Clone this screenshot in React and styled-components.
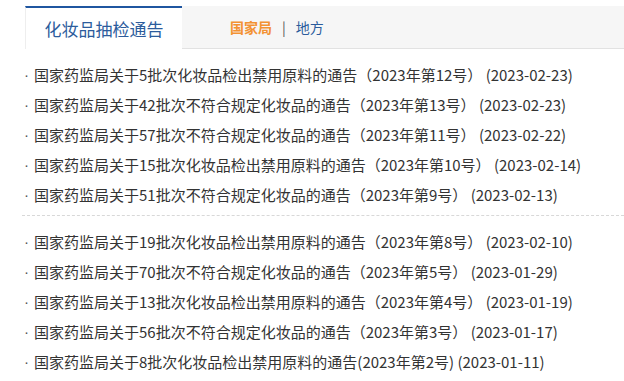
import styled, { createGlobalStyle } from 'styled-components';

const GlobalStyle = createGlobalStyle`
  body {
    margin: 0;
    background: #fff;
    font-family: "Noto Sans CJK SC", "Microsoft YaHei", sans-serif;
  }
`;

const Wrapper = styled.div`
  padding: 6px 0 0 22px;
`;

const TabBar = styled.div`
  display: flex;
  align-items: stretch;
  height: 42px;
  margin-left: 3px;
  background: #f6f6f6;
  border-bottom: 1px solid #e2e2e2;
`;

const ActiveTab = styled.div`
  width: 156px;
  display: flex;
  align-items: center;
  justify-content: center;
  background: #fff;
  border-top: 2px solid #1f56a0;
  border-left: 1px solid #eee;
  margin-bottom: -1px;
  font-size: 17px;
  color: #2c5c9c;
`;

const SubTabs = styled.div`
  display: flex;
  align-items: center;
  padding-left: 48px;
  font-size: 14px;
  color: #2c5c9c;
`;

const SubTab = styled.span`
  color: ${(p) => (p.$active ? '#f39233' : '#2c5c9c')};
  font-weight: ${(p) => (p.$active ? 600 : 400)};
`;

const Sep = styled.span`
  margin: 0 10px;
  color: #555;
`;

const List = styled.ul`
  list-style: none;
  margin: 0;
  padding: ${(p) => (p.$first ? '10px 0 6px' : '10px 0 0')};
  border-bottom: ${(p) => (p.$first ? '1px dashed #d8d8d8' : 'none')};
`;

const Item = styled.li`
  display: flex;
  align-items: center;
  height: 30px;
  font-size: 15px;
  color: #333;
  white-space: nowrap;
`;

const Dot = styled.span`
  flex: none;
  box-sizing: border-box;
  width: 12px;
  padding-left: 2px;
  font-family: "Liberation Sans", sans-serif;
  color: #555;
`;

const groupA = [
  '国家药监局关于5批次化妆品检出禁用原料的通告（2023年第12号） (2023-02-23)',
  '国家药监局关于42批次不符合规定化妆品的通告（2023年第13号） (2023-02-23)',
  '国家药监局关于57批次不符合规定化妆品的通告（2023年第11号） (2023-02-22)',
  '国家药监局关于15批次化妆品检出禁用原料的通告（2023年第10号） (2023-02-14)',
  '国家药监局关于51批次不符合规定化妆品的通告（2023年第9号） (2023-02-13)',
];

const groupB = [
  '国家药监局关于19批次化妆品检出禁用原料的通告（2023年第8号） (2023-02-10)',
  '国家药监局关于70批次不符合规定化妆品的通告（2023年第5号） (2023-01-29)',
  '国家药监局关于13批次化妆品检出禁用原料的通告（2023年第4号） (2023-01-19)',
  '国家药监局关于56批次不符合规定化妆品的通告（2023年第3号） (2023-01-17)',
  '国家药监局关于8批次化妆品检出禁用原料的通告(2023年第2号) (2023-01-11)',
];

export default function App() {
  return (
    <Wrapper>
      <GlobalStyle />
      <TabBar>
        <ActiveTab>化妆品抽检通告</ActiveTab>
        <SubTabs>
          <SubTab $active>国家局</SubTab>
          <Sep>|</Sep>
          <SubTab>地方</SubTab>
        </SubTabs>
      </TabBar>
      <List $first>
        {groupA.map((t) => (
          <Item key={t}>
            <Dot>·</Dot>
            {t}
          </Item>
        ))}
      </List>
      <List>
        {groupB.map((t) => (
          <Item key={t}>
            <Dot>·</Dot>
            {t}
          </Item>
        ))}
      </List>
    </Wrapper>
  );
}
